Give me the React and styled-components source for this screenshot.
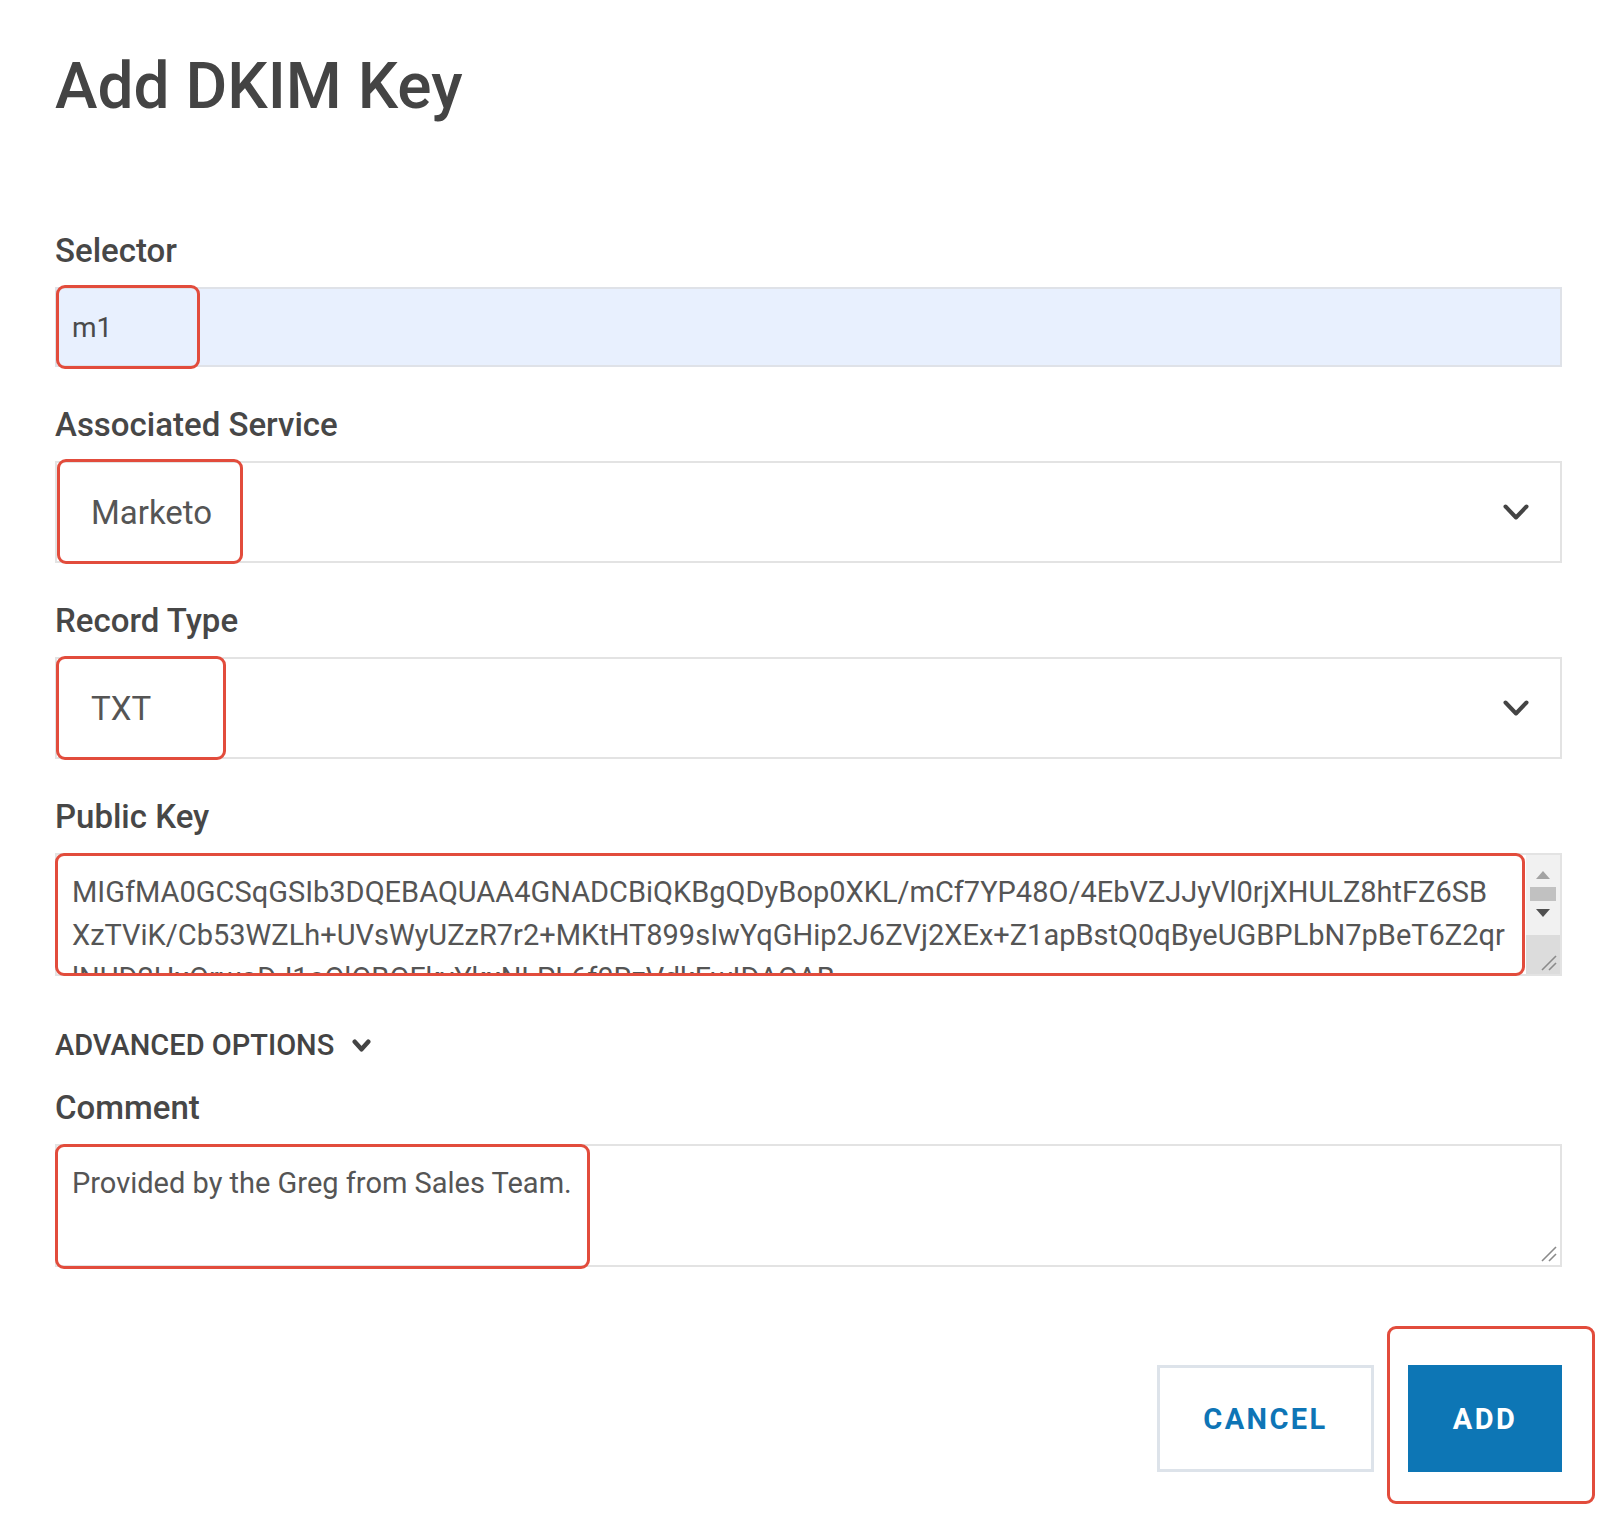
import React from "react";
import styled, { createGlobalStyle } from "styled-components";

const GlobalStyle = createGlobalStyle`
  html, body {
    margin: 0;
    padding: 0;
    background: #ffffff;
  }
  body {
    font-family: Roboto, "Liberation Sans", Arial, sans-serif;
    color: #444444;
  }
`;

const Page = styled.div`
  padding: 49px 55px 40px 55px;
  width: 1507px;
`;

const Title = styled.h1`
  margin: 0;
  font-size: 64px;
  line-height: 75px;
  font-weight: 500;
  color: #444444;
`;

const Form = styled.div`
  margin-top: 107px;
  display: flex;
  flex-direction: column;
`;

const Group = styled.div`
  display: flex;
  flex-direction: column;
  margin-bottom: ${(p) => (p.$last ? 0 : 38)}px;
`;

const Label = styled.div`
  font-size: 33px;
  line-height: 40px;
  font-weight: 500;
  color: #474747;
  margin-bottom: 16px;
`;

const FieldWrap = styled.div`
  position: relative;
`;

const Highlight = styled.div`
  position: absolute;
  left: ${(p) => p.$l}px;
  top: ${(p) => p.$t}px;
  width: ${(p) => p.$w}px;
  height: ${(p) => p.$h}px;
  box-sizing: border-box;
  border: 3px solid #e24c3c;
  border-radius: 9px;
  pointer-events: none;
`;

const TextInput = styled.div`
  box-sizing: border-box;
  height: 80px;
  border: 2px solid #dfe2e8;
  background: #e8f0fe;
  padding: 0 15px;
  display: flex;
  align-items: center;
  font-size: 28px;
  color: #4a4a4a;
`;

const SelectBox = styled.div`
  box-sizing: border-box;
  height: 102px;
  border: 2px solid #e3e3e3;
  background: #ffffff;
  padding: 0 31px 0 34px;
  display: flex;
  align-items: center;
  justify-content: space-between;
  font-size: 33px;
  color: #555555;
`;

const AreaBox = styled.div`
  position: relative;
  box-sizing: border-box;
  height: 123px;
  border: 2px solid #e3e3e3;
  background: #ffffff;
  display: flex;
`;

const AreaText = styled.div`
  flex: 1;
  overflow: hidden;
  padding: 16px 15px 0 15px;
  font-size: 29px;
  line-height: 43px;
  color: #555555;
  white-space: pre;
`;

const ScrollCol = styled.div`
  width: 34px;
  display: flex;
  flex-direction: column;
`;

const ScrollTrack = styled.div`
  flex: 1;
  background: #f1f1f1;
  display: flex;
  flex-direction: column;
  align-items: center;
  padding-top: 16px;
  gap: 8px;
`;

const Thumb = styled.div`
  width: 26px;
  height: 14px;
  background: #c1c1c1;
`;

const ScrollCorner = styled.div`
  height: 36px;
  background: #dcdcdc;
  display: flex;
  align-items: flex-end;
  justify-content: flex-end;
  padding: 0 3px 3px 0;
`;

const Grip = styled.div`
  position: absolute;
  right: 3px;
  bottom: 3px;
  width: 18px;
  height: 18px;
`;

const Advanced = styled.div`
  margin-top: 51px;
  margin-bottom: 25px;
  display: flex;
  align-items: center;
  gap: 18px;
  font-size: 29px;
  line-height: 36px;
  font-weight: 500;
  color: #444444;
`;

const Buttons = styled.div`
  margin-top: 98px;
  display: flex;
  justify-content: flex-end;
  gap: 34px;
`;

const Button = styled.button`
  position: relative;
  box-sizing: border-box;
  height: 107px;
  width: ${(p) => (p.$primary ? 154 : 217)}px;
  border: ${(p) => (p.$primary ? "none" : "3px solid #dde3ea")};
  background: ${(p) => (p.$primary ? "#0d76b5" : "#ffffff")};
  color: ${(p) => (p.$primary ? "#ffffff" : "#0e75b6")};
  font-family: Roboto, "Liberation Sans", Arial, sans-serif;
  font-size: 29px;
  font-weight: 700;
  letter-spacing: 2.4px;
  padding: 0;
  cursor: pointer;
`;

const Chevron = ({ w = 26, h = 16, sw = 4 }) => (
  <svg width={w} height={h} viewBox={`0 0 ${w} ${h}`}>
    <polyline
      points={`${sw / 2 + 0.5},${sw / 2 + 0.5} ${w / 2},${h - sw / 2 - 0.5} ${w - sw / 2 - 0.5},${sw / 2 + 0.5}`}
      fill="none"
      stroke="#444444"
      strokeWidth={sw}
      strokeLinecap="round"
      strokeLinejoin="round"
    />
  </svg>
);

const ResizeGrip = () => (
  <svg width="18" height="18" viewBox="0 0 18 18">
    <line x1="3" y1="17" x2="17" y2="3" stroke="#8a8a8a" strokeWidth="1.6" />
    <line x1="10" y1="17" x2="17" y2="10" stroke="#8a8a8a" strokeWidth="1.6" />
  </svg>
);

const publicKey = [
  "MIGfMA0GCSqGSIb3DQEBAQUAA4GNADCBiQKBgQDyBop0XKL/mCf7YP48O/4EbVZJJyVl0rjXHULZ8htFZ6SB",
  "XzTViK/Cb53WZLh+UVsWyUZzR7r2+MKtHT899sIwYqGHip2J6ZVj2XEx+Z1apBstQ0qByeUGBPLbN7pBeT6Z2qr",
  "lNUD2HxOrwoDJ1aOlOBOFkvYkxNLPL6f0RzVdkFwIDAQAB",
].join("\n");

const App = () => {
  return (
    <Page>
      <GlobalStyle />
      <Title>Add DKIM Key</Title>
      <Form>
        <Group>
          <Label>Selector</Label>
          <FieldWrap>
            <TextInput>m1</TextInput>
            <Highlight $l={1} $t={-2} $w={144} $h={84} />
          </FieldWrap>
        </Group>
        <Group>
          <Label>Associated Service</Label>
          <FieldWrap>
            <SelectBox>
              <span>Marketo</span>
              <Chevron />
            </SelectBox>
            <Highlight $l={2} $t={-2} $w={186} $h={105} />
          </FieldWrap>
        </Group>
        <Group>
          <Label>Record Type</Label>
          <FieldWrap>
            <SelectBox>
              <span>TXT</span>
              <Chevron />
            </SelectBox>
            <Highlight $l={1} $t={-1} $w={170} $h={104} />
          </FieldWrap>
        </Group>
        <Group $last>
          <Label>Public Key</Label>
          <FieldWrap>
            <AreaBox>
              <AreaText>{publicKey}</AreaText>
              <ScrollCol>
                <ScrollTrack>
                  <svg width="14" height="8" viewBox="0 0 14 8">
                    <polygon points="0,8 7,0 14,8" fill="#a3a3a3" />
                  </svg>
                  <Thumb />
                  <svg width="14" height="8" viewBox="0 0 14 8">
                    <polygon points="0,0 14,0 7,8" fill="#505050" />
                  </svg>
                </ScrollTrack>
                <ScrollCorner>
                  <ResizeGrip />
                </ScrollCorner>
              </ScrollCol>
            </AreaBox>
            <Highlight $l={0} $t={0} $w={1470} $h={123} />
          </FieldWrap>
        </Group>

        <Advanced>
          <span>ADVANCED OPTIONS</span>
          <Chevron w={19} h={13} sw={4.5} />
        </Advanced>

        <Group $last>
          <Label>Comment</Label>
          <FieldWrap>
            <AreaBox>
              <AreaText>Provided by the Greg from Sales Team.</AreaText>
              <Grip>
                <ResizeGrip />
              </Grip>
            </AreaBox>
            <Highlight $l={0} $t={0} $w={535} $h={125} />
          </FieldWrap>
        </Group>

        <Buttons>
          <Button>CANCEL</Button>
          <Button $primary>
            ADD
            <Highlight $l={-21} $t={-39} $w={208} $h={178} />
          </Button>
        </Buttons>
      </Form>
    </Page>
  );
};

export default App;
